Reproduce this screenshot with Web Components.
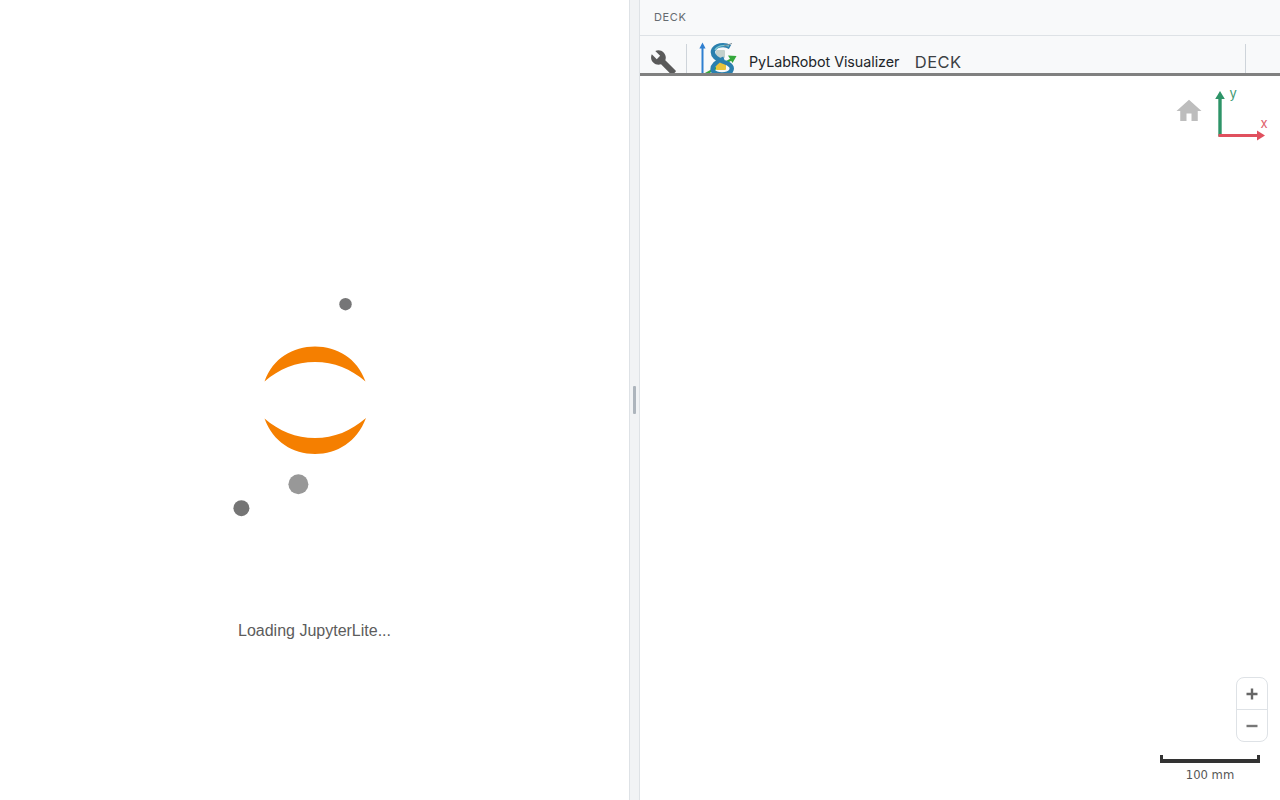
<!DOCTYPE html>
<html>
<head>
<meta charset="utf-8">
<title>PyLabRobot Visualizer</title>
<style>
  html, body {margin:0; height:100%; overflow:hidden; background:#fff;}
  pl-app {height:100vh;}
</style>
</head>
<body>
<pl-app>
  <pl-loader slot="left">Loading JupyterLite...</pl-loader>
  <pl-splitter slot="split"></pl-splitter>
  <pl-pane slot="right" label="DECK">
    <pl-toolbar title-text="PyLabRobot Visualizer" deck="DECK"></pl-toolbar>
    <pl-viewport scale="100 mm"></pl-viewport>
  </pl-pane>
</pl-app>
<script>
customElements.define('pl-app', class extends HTMLElement {
    constructor() {
	super();
	this.attachShadow({mode: 'open'}).innerHTML = `
<style>
  :host {display:grid; grid-template-columns:629px 11px 1fr; width:100%; overflow:hidden;}
</style>
<slot name="left"></slot><slot name="split"></slot><slot name="right"></slot>`;
    }
});

customElements.define('pl-loader', class extends HTMLElement {
    constructor() {
	super();
	this.attachShadow({mode: 'open'}).innerHTML = `
<style>
  :host {display:flex; flex-direction:column; align-items:center; padding-top:280px; background:#fff;
         font:16px "Liberation Sans", Arial, sans-serif; color:#5c5c5c;}
  svg {display:block;}
  #msg {margin-top:1px; line-height:20px;}
</style>
<svg width="200" height="340" viewBox="215 280 200 340">
  <path fill="#f57f00" d="M264.5 381.5C273 358 293 346.5 315 346.5C337 346.5 357 358 365.5 381.5C351 369 334 362 315 362C296 362 279 369 264.5 381.5Z"/>
  <path fill="#f57f00" d="M264.5 418.5C279 431 296 438 315 438C334 438 351 431 366 418C357 442 337 454 315 454C293 454 273 442 264.5 418.5Z"/>
  <circle cx="345.5" cy="304.2" r="6.2" fill="#767677"/>
  <circle cx="298.4" cy="484.2" r="10" fill="#989898"/>
  <circle cx="241.4" cy="508.2" r="8" fill="#757575"/>
</svg>
<div id="msg"><slot></slot></div>`;
    }
});

customElements.define('pl-splitter', class extends HTMLElement {
    constructor() {
	super();
	this.attachShadow({mode: 'open'}).innerHTML = `
<style>
  :host {display:flex; align-items:center; box-sizing:border-box; background:#f1f3f5;
         border-left:1px solid #dee2e6; border-right:1px solid #dee2e6; padding-left:3px;}
  #grip {width:3px; height:28px; background:#adb5bd; border-radius:1px;}
</style>
<div id="grip"></div>`;
    }
});

customElements.define('pl-pane', class extends HTMLElement {
    constructor() {
	super();
	this.attachShadow({mode: 'open'}).innerHTML = `
<style>
  :host {display:flex; flex-direction:column; min-width:0; height:100vh; background:#fff;}
  #head {box-sizing:border-box; height:36px; flex:none; display:flex; align-items:center; padding:0 0 2px 14px;
         background:#f8f9fa; border-bottom:1px solid #dee2e6;
         font:11px Inter, "Liberation Sans", sans-serif; letter-spacing:.65px; color:#666b70;}
</style>
<div id="head"></div>
<slot></slot>`;
	this.shadowRoot.getElementById('head').textContent = this.getAttribute('label');
    }
});

customElements.define('pl-toolbar', class extends HTMLElement {
    constructor() {
	super();
	this.attachShadow({mode: 'open'}).innerHTML = `
<style>
  :host {display:flex; box-sizing:border-box; height:40px; flex:none; align-items:stretch; overflow:hidden;
         background:#f8f9fa; border-bottom:3px solid #808080; position:relative;
         font-family:Inter, "Liberation Sans", sans-serif; color:#212529;}
  #tool {width:46px; flex:none; position:relative;}
  #tool svg {position:absolute; left:10px; top:13px;}
  .sep {width:1px; flex:none; background:#ced4da; margin-top:8px; margin-bottom:-3px;}
  #logo {flex:none; margin-left:9px; margin-top:6px; display:block;}
  #name {flex:none; margin-left:9px; font-size:14.3px; line-height:52px; letter-spacing:-.05px;}
  #deck {flex:none; margin-left:15.5px; font-size:16.5px; line-height:52px; letter-spacing:.45px; color:#3c4044;}
  #fill {flex:1;}
  #end {width:34px; flex:none;}
</style>
<div id="tool">
  <svg width="27" height="27" viewBox="0 0 24 24"><path fill="#5a5a5a" d="M22.7 19l-9.1-9.1c.9-2.3.4-5-1.5-6.9-2-2-5-2.4-7.4-1.3L9 6 6 9 1.6 4.7C.4 7.1.9 10.1 2.9 12.1c1.9 1.9 4.6 2.4 6.9 1.5l9.1 9.1c.4.4 1 .4 1.4 0l2.3-2.3c.5-.4.5-1.1.1-1.4z"/></svg>
</div>
<div class="sep"></div>
<svg id="logo" width="44" height="34" viewBox="696 42 44 34">
  <path d="M702.5 76V46" stroke="#2f7fd0" stroke-width="2" fill="none"/>
  <path d="M699.4 48.5L702.5 42.6L705.6 48.5Z" fill="#2f7fd0"/>
  <path d="M703 75.5L732 59" stroke="#35a83c" stroke-width="2.4" fill="none"/>
  <path d="M728 55.5L736.5 56L732.5 63Z" fill="#35a83c"/>
  <path d="M735 74.5l4 1" stroke="#b04040" stroke-width="1.6" fill="none"/>
  <rect x="716" y="50" width="9" height="8" rx="1" fill="#c4d0cc"/>
  <rect x="716" y="63" width="10" height="7" rx="1" fill="#e9c43c"/>
  <path d="M730 47C724 43.5 715 45 713 51C712 57 718 60 724 62C731 64 733 67.5 731 71C728 75.5 716 75.5 713 71C711 66 717 61 724 58.5" stroke="#2a7fae" stroke-width="4.4" fill="none"/>
  <path d="M729 46C724 44.5 717 46 715 50" stroke="#7cc6cf" stroke-width="1.4" fill="none"/>
  <path d="M724 46l8-2.5" stroke="#7f8f96" stroke-width="1" fill="none"/>
</svg>
<div id="name"></div>
<div id="deck"></div>
<div id="fill"></div>
<div class="sep"></div>
<div id="end"></div>`;
	this.shadowRoot.getElementById('name').textContent = this.getAttribute('title-text');
	this.shadowRoot.getElementById('deck').textContent = this.getAttribute('deck');
    }
});

customElements.define('pl-viewport', class extends HTMLElement {
    constructor() {
	super();
	this.attachShadow({mode: 'open'}).innerHTML = `
<style>
  :host {display:block; flex:1; position:relative; background:#fff;
         font-family:"DejaVu Sans", Verdana, sans-serif;}
  #home {position:absolute; left:534px; top:20px;}
  #axes {position:absolute; left:570px; top:6px; font:13px Inter, "Liberation Sans", sans-serif;}
  #zoom {position:absolute; right:12px; bottom:58px; width:32px; box-sizing:border-box;
         border:1px solid #dee2e6; border-radius:8px; background:#fff; display:flex; flex-direction:column;}
  #zoom div {height:31px; display:flex; align-items:center; justify-content:center;}
  #zoom div + div {border-top:1px solid #dee2e6;}
  #scale {position:absolute; right:20px; bottom:17px; width:100px; display:flex; flex-direction:column; align-items:center;}
  #bar {width:100%; box-sizing:border-box; height:8px; border:3px solid #333; border-width:0 3px 4px;}
  #label {font-size:11.6px; line-height:16px; margin-top:4px; color:#555; white-space:nowrap;}
</style>
<svg id="home" width="30" height="30" viewBox="0 0 24 24"><path fill="#bdbdbd" d="M10 20v-6h4v6h5v-8h3L12 3 2 12h3v8z"/></svg>
<svg id="axes" width="70" height="64" viewBox="570 6 70 64">
  <path d="M580 60.5V19" stroke="#2e9468" stroke-width="3.4" fill="none"/>
  <path d="M575.2 23L580 15L584.8 23Z" fill="#2e9468"/>
  <path d="M578.5 59.5H618" stroke="#e0505e" stroke-width="3.2" fill="none"/>
  <path d="M617 54.5L625 59.5L617 64.5Z" fill="#e0505e"/>
  <text x="589.5" y="22" fill="#3f9a74">y</text>
  <text x="620.5" y="52" fill="#e0606c">x</text>
</svg>
<div id="zoom">
  <div><svg width="12" height="12" viewBox="0 0 12 12"><path d="M6 .5V11.5M.5 6H11.5" stroke="#666" stroke-width="2.4" fill="none"/></svg></div>
  <div><svg width="12" height="12" viewBox="0 0 12 12"><path d="M.5 6H11.5" stroke="#777" stroke-width="2.4" fill="none"/></svg></div>
</div>
<div id="scale"><div id="bar"></div><div id="label"></div></div>`;
	this.shadowRoot.getElementById('label').textContent = this.getAttribute('scale');
    }
});
</script>
</body>
</html>
